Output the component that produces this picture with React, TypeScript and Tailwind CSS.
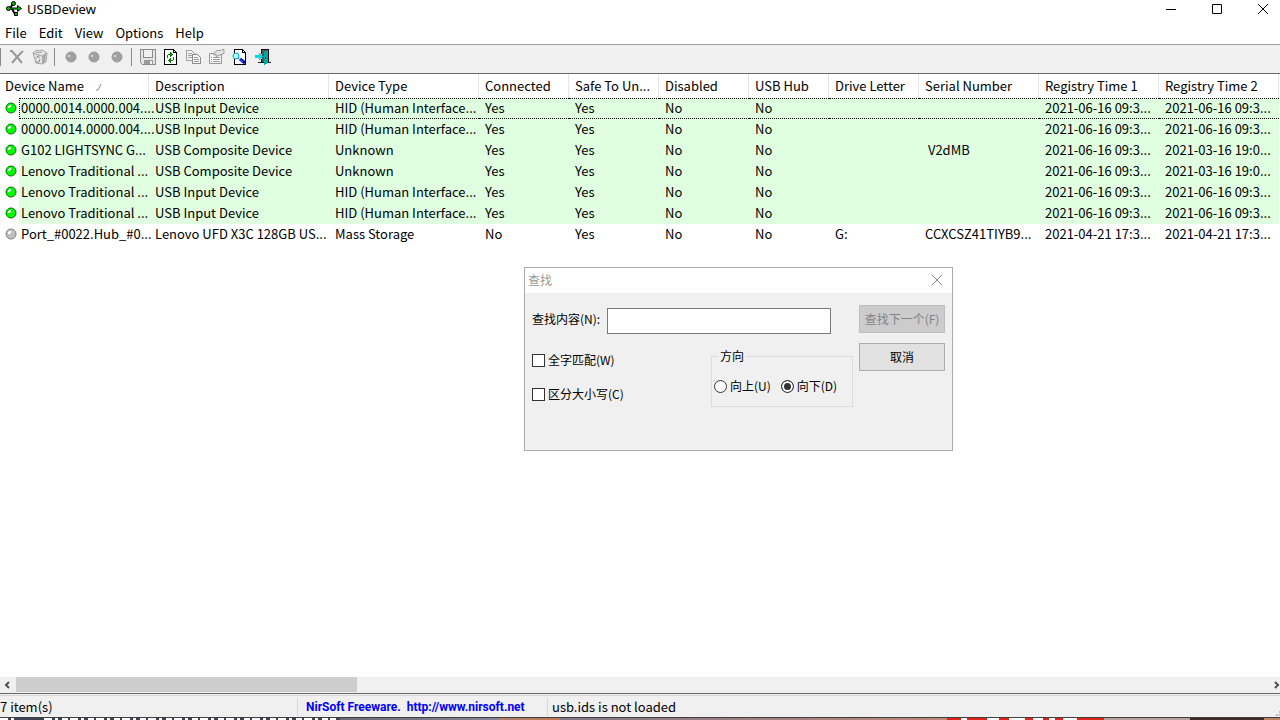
import React, { useState } from 'react';

type Column = { label: string; width: string };

const columns: Column[] = [
  { label: 'Device Name', width: 'w-[149px]' },
  { label: 'Description', width: 'w-[180px]' },
  { label: 'Device Type', width: 'w-[150px]' },
  { label: 'Connected', width: 'w-[90px]' },
  { label: 'Safe To Un...', width: 'w-[90px]' },
  { label: 'Disabled', width: 'w-[90px]' },
  { label: 'USB Hub', width: 'w-[80px]' },
  { label: 'Drive Letter', width: 'w-[90px]' },
  { label: 'Serial Number', width: 'w-[120px]' },
  { label: 'Registry Time 1', width: 'w-[120px]' },
  { label: 'Registry Time 2', width: 'w-[120px]' },
];

const HID = 'HID (Human Interface...';

const devices: string[][] = [
  ['0000.0014.0000.004....', 'USB Input Device', HID, 'Yes', 'Yes', 'No', 'No', '', '', '2021-06-16 09:3...', '2021-06-16 09:3...'],
  ['0000.0014.0000.004....', 'USB Input Device', HID, 'Yes', 'Yes', 'No', 'No', '', '', '2021-06-16 09:3...', '2021-06-16 09:3...'],
  ['G102 LIGHTSYNC G...', 'USB Composite Device', 'Unknown', 'Yes', 'Yes', 'No', 'No', '', ' V2dMB', '2021-06-16 09:3...', '2021-03-16 19:0...'],
  ['Lenovo Traditional ...', 'USB Composite Device', 'Unknown', 'Yes', 'Yes', 'No', 'No', '', '', '2021-06-16 09:3...', '2021-03-16 19:0...'],
  ['Lenovo Traditional ...', 'USB Input Device', HID, 'Yes', 'Yes', 'No', 'No', '', '', '2021-06-16 09:3...', '2021-06-16 09:3...'],
  ['Lenovo Traditional ...', 'USB Input Device', HID, 'Yes', 'Yes', 'No', 'No', '', '', '2021-06-16 09:3...', '2021-06-16 09:3...'],
  ['Port_#0022.Hub_#0...', 'Lenovo UFD X3C 128GB US...', 'Mass Storage', 'No', 'Yes', 'No', 'No', 'G:', 'CCXCSZ41TIYB9...', '2021-04-21 17:3...', '2021-04-21 17:3...'],
];

function AppIcon() {
  return (
    <svg width="17" height="17" viewBox="0 0 17 17" fill="none" className="shrink-0">
      <path d="M4 7.500h8M4 7l3-4M6 8l3 5" stroke="#000" strokeWidth="2" />
      <path d="M11.500 4.500l4 3-4 3z" fill="#0b0" stroke="#000" />
      <circle cx="2.500" cy="7.500" r="2" fill="#0b0" stroke="#000" />
      <circle cx="7.500" cy="2.500" r="2" fill="#0b0" stroke="#000" />
      <path d="M8.500 11.500h3v3h-3z" fill="#0b0" stroke="#000" />
      <path d="M4 7.500h8" stroke="#060" />
    </svg>
  );
}

function DeleteIcon() {
  return (
    <svg width="16" height="16" viewBox="0 0 16 16" fill="none">
      <path d="M4 3l10 12M15 3L9 8l-6 7" stroke="#fff" />
      <path d="M1 2h2l5 6 5 6M14 2L9 7l-6 7" stroke="#989898" strokeWidth="2" />
    </svg>
  );
}

function RecycleIcon() {
  return (
    <svg width="16" height="16" viewBox="0 0 16 16">
      <path d="M1 4l4-3 2 1 3-1 5 3-1 9-4 2-6-1z" fill="#e8e8e8" stroke="#a0a0a0" />
      <path d="M1 4l5 2 4 1 5-3M4 3l3 1 3-1" stroke="#a0a0a0" fill="none" />
      <path d="M10 7l4-2-1 8-3 2z" fill="#a8a8a8" />
      <path d="M4 10l2-3 2 2M8 10l-1 3H4" stroke="#8c8c8c" fill="none" />
    </svg>
  );
}

function DotIcon() {
  return (
    <svg width="16" height="16" viewBox="0 0 16 16">
      <circle cx="8" cy="8" r="5" fill="#a0a0a0" stroke="#989898" />
      <path d="M5 6h2v2H5z" fill="#dcdcdc" />
    </svg>
  );
}

function SaveIcon() {
  return (
    <svg width="16" height="16" viewBox="0 0 16 16" fill="none" shapeRendering="crispEdges">
      <path d="M.5.5h15v15H2.500l-2-2z" fill="#e4e4e4" stroke="#8c8c8c" />
      <path d="M3.500 1v7h9V1" fill="#f0f0f0" stroke="#8c8c8c" />
      <path d="M4 11h9v4H4z" fill="#999" />
      <path d="M10 12h2v3h-2z" fill="#eee" />
    </svg>
  );
}

function RefreshIcon() {
  return (
    <svg width="16" height="16" viewBox="0 0 16 16" fill="none" shapeRendering="crispEdges">
      <path d="M1.500.5h9l3 3v12h-12z" fill="#fff" stroke="#000" />
      <path d="M10.500 0v3.500H14" stroke="#000" />
      <path d="M4 6h1v3H4zM5 5h2v1H5zM7 3h1v5H7zM8 4h1v3H8zM9 5h1v1H9z" fill="#008000" />
      <path d="M10 8h1v3h-1zM8 11h2v1H8zM7 9h1v5H7zM6 10h1v3H6zM5 11h1v1H5z" fill="#008000" />
    </svg>
  );
}

function CopyIcon() {
  return (
    <svg width="16" height="16" viewBox="0 0 16 16" fill="none" shapeRendering="crispEdges">
      <path d="M.5 1.500h5l3 3v7h-8z" fill="#f4f4f4" stroke="#a0a0a0" />
      <path d="M2 4.500h4M2 6.500h5M2 8.500h5" stroke="#a0a0a0" />
      <path d="M6.500 5.500h5l3 3v6h-8z" fill="#f4f4f4" stroke="#8c8c8c" />
      <path d="M8 8.500h4M8 10.500h5M8 12.500h5" stroke="#a0a0a0" />
    </svg>
  );
}

function PropertiesIcon() {
  return (
    <svg width="16" height="16" viewBox="0 0 16 16" fill="none">
      <path d="M.5 4.500h12v10H.5z" fill="#f4f4f4" stroke="#999" />
      <path d="M2 8.500h1M4 8.500h7M2 10.500h1M4 10.500h7M2 12.500h1M4 12.500h7" stroke="#a0a0a0" />
      <path d="M4 5l4-3.500h4l1-1h2v4l-3 1-2 1-3 1V5L5 6z" fill="#e4e4e4" stroke="#999" />
    </svg>
  );
}

function FindIcon() {
  return (
    <svg width="16" height="16" viewBox="0 0 16 16" fill="none">
      <path d="M2.500.5h8l3 3v12h-11z" fill="#fff" stroke="#000" shapeRendering="crispEdges" />
      <path d="M10.500 0v3.500H14" stroke="#000" shapeRendering="crispEdges" />
      <circle cx="4" cy="7" r="3" fill="#a8ffff" stroke="#00a8b8" />
      <path d="M8 10l5 4" stroke="#0000b0" strokeWidth="3" />
      <path d="M6 9l5 4" stroke="#38f" />
    </svg>
  );
}

function ExitIcon() {
  return (
    <svg width="16" height="16" viewBox="0 0 16 16" fill="none" shapeRendering="crispEdges">
      <path d="M6.500 5V.5h7v13h-7V10" fill="#555" stroke="#111" />
      <path d="M9 3l4-2v13l-4 2z" fill="#00a8a8" />
      <path d="M10 8h1v2h-1z" fill="#000" />
      <path d="M0 6h4V4l4 3.500L4 11V9H0z" fill="#00d8e0" />
      <path d="M3 13h3v1H3zM14 13h2v1h-2z" fill="#222" />
    </svg>
  );
}

function ToolButton({ label, children }: { label: string; children: React.ReactNode }) {
  return (
    <button type="button" aria-label={label} className="w-[23px] h-[22px] pl-1 flex items-center">
      {children}
    </button>
  );
}

function ToolSeparator() {
  return <div className="w-px h-[18px] ml-[3px] mr-1 bg-[#8c8c8c]" />;
}

function TitleBar() {
  return (
    <div className="h-[18px] flex items-center justify-between pl-[6px] pr-[11px] font-['Noto_Sans',sans-serif]">
      <div className="flex items-center gap-1">
        <AppIcon />
        <span>USBDeview</span>
      </div>
      <div className="flex items-center gap-[34px] pb-px">
        <button type="button" aria-label="Minimize">
          <svg width="12" height="12" viewBox="0 0 12 12" stroke="#000"><path d="M1 6.500h10" /></svg>
        </button>
        <button type="button" aria-label="Maximize">
          <svg width="12" height="12" viewBox="0 0 12 12" stroke="#000" fill="none"><path d="M1.500 1.500h9v9h-9z" /></svg>
        </button>
        <button type="button" aria-label="Close">
          <svg width="12" height="12" viewBox="0 0 12 12" stroke="#000"><path d="M1 1l10 10M11 1L1 11" /></svg>
        </button>
      </div>
    </div>
  );
}

function MenuBar() {
  return (
    <nav className="h-[26px] pt-1 pl-[5px] flex gap-3 items-center">
      {['File', 'Edit', 'View', 'Options', 'Help'].map((item) => (
        <button type="button" key={item}>{item}</button>
      ))}
    </nav>
  );
}

function Toolbar() {
  return (
    <div className="h-[30px] flex items-center bg-[#f0f0f0] border-t border-t-[#a0a0a0] border-b border-b-[#696969] pb-1">
      <div className="w-px h-[18px] mr-1 bg-[#8c8c8c]" />
      <ToolButton label="Uninstall"><DeleteIcon /></ToolButton>
      <ToolButton label="Recycle"><RecycleIcon /></ToolButton>
      <ToolSeparator />
      <ToolButton label="Disconnect"><DotIcon /></ToolButton>
      <ToolButton label="Disable"><DotIcon /></ToolButton>
      <ToolButton label="Enable"><DotIcon /></ToolButton>
      <ToolSeparator />
      <ToolButton label="Save"><SaveIcon /></ToolButton>
      <ToolButton label="Refresh"><RefreshIcon /></ToolButton>
      <ToolButton label="Copy"><CopyIcon /></ToolButton>
      <ToolButton label="Properties"><PropertiesIcon /></ToolButton>
      <ToolButton label="Find"><FindIcon /></ToolButton>
      <ToolButton label="Exit"><ExitIcon /></ToolButton>
    </div>
  );
}

function StatusDot({ on }: { on: boolean }) {
  return (
    <svg width="12" height="12" viewBox="0 0 12 12" className="shrink-0 mb-px">
      <circle cx="6" cy="6" r="5" fill={on ? '#00ff00' : '#c0c0c0'} stroke={on ? '#007800' : '#808080'} />
      <path d="M3 4h1V3h2v2H5v1H3z" fill="#fff" />
    </svg>
  );
}

function DeviceTable() {
  return (
    <div className="flex-1 min-h-0 overflow-hidden">
      <table className="w-[1279px] table-fixed border-separate border-spacing-0">
        <thead>
          <tr className="h-[24px]">
            {columns.map((col, i) => (
              <th
                key={col.label}
                className={`${col.width} p-0 font-normal text-left whitespace-nowrap border-r border-r-[#e5e5e5] ${i === 0 ? 'pl-[5px]' : 'pl-[6px]'}`}
              >
                {col.label}
                {i === 0 && (
                  <svg width="6" height="7" viewBox="0 0 6 7" className="inline ml-3" fill="none" stroke="#888">
                    <path d="M0 6h2l3-6" />
                  </svg>
                )}
              </th>
            ))}
          </tr>
        </thead>
        <tbody>
          {devices.map((row, r) => {
            const on = row[3] === 'Yes';
            const fill = on ? 'bg-[#e0ffe0]' : 'bg-white';
            const edge = r === 0 ? 'border-y border-dotted border-black pb-px' : 'pb-px';
            return (
              <tr key={r} className="h-[21px]">
                {row.map((cell, c) =>
                  c === 0 ? (
                    <td key={c} className="p-0">
                      <div className="flex items-center h-[21px] pl-[5px] gap-[2px]">
                        <StatusDot on={on} />
                        <span className={`flex-1 h-[21px] flex items-center whitespace-nowrap ${r === 0 ? 'border-l pl-px' : 'pl-[2px]'} ${fill} ${edge}`}>{cell}</span>
                      </div>
                    </td>
                  ) : (
                    <td key={c} className="p-0">
                      <div className={`h-[21px] flex items-center pl-[6px] whitespace-pre ${fill} ${edge}`}>{cell}</div>
                    </td>
                  ),
                )}
              </tr>
            );
          })}
        </tbody>
      </table>
    </div>
  );
}

function ScrollBar() {
  return (
    <div className="h-4 flex items-center justify-between bg-[#f0f0f0]">
      <button type="button" aria-label="Scroll left" className="w-4 h-4 pl-[3px]">
        <svg width="8" height="8" viewBox="0 0 8 8" fill="none" stroke="#505050" strokeWidth="2"><path d="M6 1L3 4l3 3" /></svg>
      </button>
      <div className="flex-1 h-full">
        <div className="w-[341px] h-[15px] bg-[#cdcdcd]" />
      </div>
      <button type="button" aria-label="Scroll right" className="w-2 h-4 flex items-center justify-center">
        <svg width="8" height="8" viewBox="0 0 8 8" fill="none" stroke="#505050" strokeWidth="2"><path d="M3 1l3 3-3 3" /></svg>
      </button>
    </div>
  );
}

function StatusBar() {
  return (
    <footer className="bg-[#f0f0f0] border-t border-t-[#696969] border-b border-b-[#404040] pt-px">
      <div className="h-[22px] flex items-center border-t border-t-[#d7d7d7]">
        <div className="w-[297px] shrink-0">7 item(s)</div>
        <div className="w-[250px] h-[18px] shrink-0 border-l border-[#d7d7d7] pl-2 flex items-center">
          <a href="#nirsoft" className="whitespace-pre font-['Roboto',sans-serif] font-bold text-[12px] text-[#0000ff]">
            {'NirSoft Freeware.  http://www.nirsoft.net'}
          </a>
        </div>
        <div className="flex-1 h-[18px] border-l border-[#d7d7d7] pl-1 flex items-center">usb.ids is not loaded</div>
        <svg width="4" height="20" viewBox="0 0 4 20" fill="#b8b8b8" className="shrink-0">
          <path d="M0 17h2v2H0zM3 17h1v2H3zM3 14h1v2H3z" />
        </svg>
      </div>
    </footer>
  );
}

// Sliver of the desktop visible under the window
function DesktopEdge() {
  return (
    <div className="h-[2px] flex">
      <svg width="340" height="2" viewBox="0 0 340 2" className="shrink-0 bg-[#3c4454]">
        <path d="M0 1h16M44 1h292" stroke="#fff" strokeWidth="2" strokeDasharray="8 3 3 4 6 2" />
      </svg>
      <div className="w-[160px] bg-linear-to-r from-[#6c6a78] to-[#8a8498]" />
      <div className="w-[60px] bg-linear-to-r from-[#b08070] to-[#c07850]" />
      <div className="flex-1 bg-linear-to-r from-[#807888] to-[#c08878]" />
      <svg width="157" height="2" viewBox="0 0 157 2" className="shrink-0 bg-[#e2231a]">
        <path d="M14 1h6M40 1h12M62 1h16M86 1h10M102 1h6M116 1h14" stroke="#fff" strokeWidth="2" />
      </svg>
      <div className="w-[86px] bg-[#b8a0a0]" />
      <div className="w-[74px] bg-[#402828]" />
      <div className="w-4 bg-[#c08060]" />
    </div>
  );
}

function FindDialog() {
  const [text, setText] = useState('');
  const [direction, setDirection] = useState('down');
  const box = 'appearance-none w-[13px] h-[13px] shrink-0 bg-white border border-[#333]';

  return (
    <div
      role="dialog"
      aria-label="查找"
      className="absolute left-[524px] top-[267px] w-[429px] h-[184px] flex flex-col bg-[#f0f0f0] border border-[#aaa] text-[12px] leading-4"
    >
      <div className="h-[25px] shrink-0 flex items-center justify-between bg-white text-[#999] pl-[3px] pr-[9px] pb-px">
        <span>查找</span>
        <button type="button" aria-label="关闭">
          <svg width="12" height="12" viewBox="0 0 12 12" stroke="#888"><path d="M1 1l10 10M11 1L1 11" /></svg>
        </button>
      </div>
      <form className="flex gap-[6px] px-[7px] pt-3" onSubmit={(e) => e.preventDefault()}>
        <div className="flex-1">
          <div className="flex items-center pt-[3px] pr-[22px]">
            <label htmlFor="find-text" className="w-[75px] pb-1">查找内容(N):</label>
            <input
              id="find-text"
              type="text"
              value={text}
              onChange={(e) => setText(e.target.value)}
              className="flex-1 min-w-0 h-[26px] px-1 bg-white border border-[#7a7a7a] outline-none"
            />
          </div>
          <div className="flex justify-between pt-[14px]">
            <div className="flex flex-col gap-[18px] pt-1">
              <label className="flex items-center gap-[3px]"><input type="checkbox" className={box} />全字匹配(W)</label>
              <label className="flex items-center gap-[3px]"><input type="checkbox" className={box} />区分大小写(C)</label>
            </div>
            <fieldset className="w-[142px] h-[59px] border border-[#dcdcdc] pl-[2px]">
              <legend className="ml-1 px-[2px]">方向</legend>
              <div className="flex gap-[10px] pt-[14px]">
                {[['up', '向上(U)'], ['down', '向下(D)']].map(([value, label]) => (
                  <label key={value} className="flex items-center gap-[3px]">
                    <input
                      type="radio"
                      name="direction"
                      checked={direction === value}
                      onChange={() => setDirection(value)}
                      className="appearance-none w-[13px] h-[13px] shrink-0 rounded-full bg-white border border-[#333] checked:bg-[#333] checked:shadow-[inset_0_0_0_2px_#fff]"
                    />
                    {label}
                  </label>
                ))}
              </div>
            </fieldset>
          </div>
        </div>
        <div className="w-[86px] flex flex-col gap-[10px]">
          <button type="submit" disabled={!text} className="h-7 bg-[#ccc] border border-[#bfbfbf] text-[#838383]">查找下一个(F)</button>
          <button type="button" className="h-7 bg-[#e1e1e1] border border-[#adadad]">取消</button>
        </div>
      </form>
    </div>
  );
}

export default function App() {
  return (
    <div className="relative h-screen flex flex-col overflow-hidden bg-white text-black font-['Noto_Sans_CJK_SC',sans-serif] text-[13px] leading-4">
      <TitleBar />
      <MenuBar />
      <Toolbar />
      <DeviceTable />
      <ScrollBar />
      <StatusBar />
      <DesktopEdge />
      <FindDialog />
    </div>
  );
}
